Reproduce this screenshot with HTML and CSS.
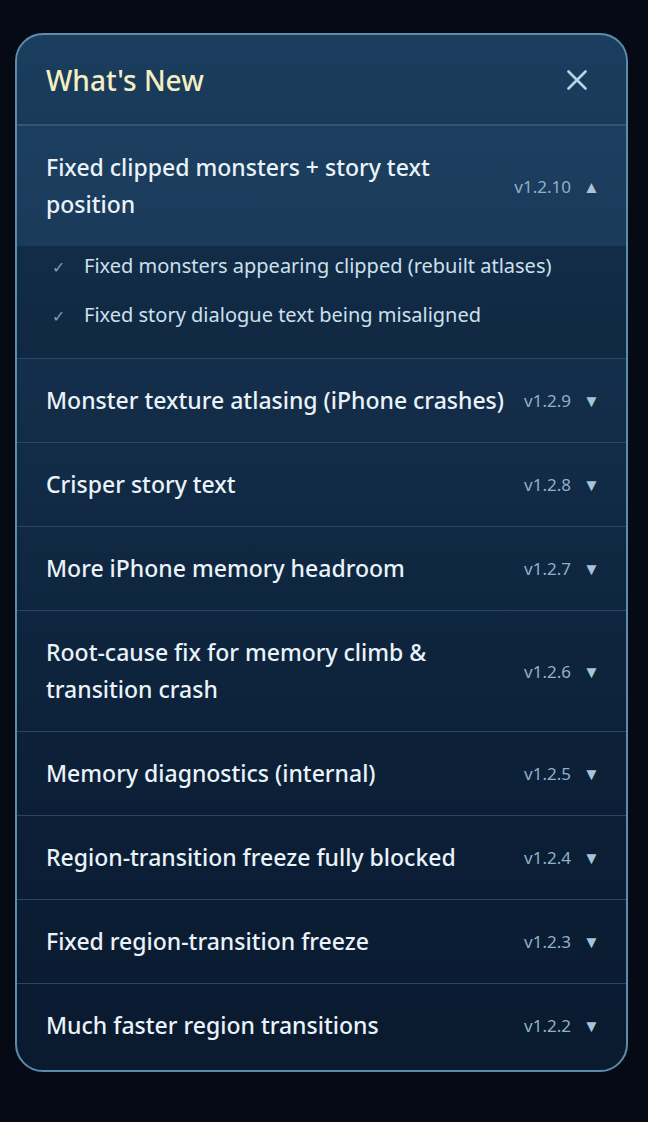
FILE: index.html
```
<!doctype html>
<html lang="en">
<head>
    <meta charset="utf-8">
    <meta name="viewport" content="width=device-width, initial-scale=1">
    <title>What's New</title>
    <link rel="stylesheet" href="styles.css">
</head>
<body>
    <div class="panel">
        <div class="panel-header">
            <h1>What's New</h1>
            <button class="close" aria-label="Close">
                <svg width="20" height="20" viewBox="0 0 20 20"><path d="M1.5 1.5 L18.5 18.5 M18.5 1.5 L1.5 18.5" stroke="#b9d3e4" stroke-width="2.6" stroke-linecap="round"/></svg>
            </button>
        </div>

        <div class="entry open">
            <div class="entry-head">
                <span class="entry-title">Fixed clipped monsters + story text position</span>
                <span class="version">v1.2.10</span>
                <span class="arrow">▲</span>
            </div>
            <ul class="entry-body">
                <li><span class="check">✓</span>Fixed monsters appearing clipped (rebuilt atlases)</li>
                <li><span class="check">✓</span>Fixed story dialogue text being misaligned</li>
            </ul>
        </div>
        <div class="entry">
            <div class="entry-head">
                <span class="entry-title">Monster texture atlasing (iPhone crashes)</span>
                <span class="version">v1.2.9</span>
                <span class="arrow">▼</span>
            </div>
        </div>
        <div class="entry">
            <div class="entry-head">
                <span class="entry-title">Crisper story text</span>
                <span class="version">v1.2.8</span>
                <span class="arrow">▼</span>
            </div>
        </div>
        <div class="entry">
            <div class="entry-head">
                <span class="entry-title">More iPhone memory headroom</span>
                <span class="version">v1.2.7</span>
                <span class="arrow">▼</span>
            </div>
        </div>
        <div class="entry">
            <div class="entry-head">
                <span class="entry-title">Root-cause fix for memory climb &amp; transition crash</span>
                <span class="version">v1.2.6</span>
                <span class="arrow">▼</span>
            </div>
        </div>
        <div class="entry">
            <div class="entry-head">
                <span class="entry-title">Memory diagnostics (internal)</span>
                <span class="version">v1.2.5</span>
                <span class="arrow">▼</span>
            </div>
        </div>
        <div class="entry">
            <div class="entry-head">
                <span class="entry-title">Region-transition freeze fully blocked</span>
                <span class="version">v1.2.4</span>
                <span class="arrow">▼</span>
            </div>
        </div>
        <div class="entry">
            <div class="entry-head">
                <span class="entry-title">Fixed region-transition freeze</span>
                <span class="version">v1.2.3</span>
                <span class="arrow">▼</span>
            </div>
        </div>
        <div class="entry">
            <div class="entry-head">
                <span class="entry-title">Much faster region transitions</span>
                <span class="version">v1.2.2</span>
                <span class="arrow">▼</span>
            </div>
        </div>
    </div>
</body>
</html>
```

FILE: styles.css
```
body {
    margin: 0;
    background-color: #050a14;
    font-family: "Noto Sans", "Open Sans", sans-serif;
    min-height: 1122px;
}
.panel {
    width: 609px;
    margin: 33px 0 0 15px;
    padding-bottom: 3px;
    border: 2px solid #5b8cab;
    border-radius: 28px;
    background: linear-gradient(180deg, #1b3e5e 0%, #142f4c 30%, #0c2038 70%, #0a1a2f 100%);
    overflow: hidden;
}
.panel-header {
    display: flex;
    align-items: center;
    justify-content: space-between;
    height: 89px;
    padding: 0 39px 0 29px;
    border-bottom: 2px solid #2f5877;
}
h1 {
    margin: 0;
    font-size: 28px;
    font-weight: 500;
    color: #f4efc2;
}
.close {
    background: none;
    border: none;
    padding: 0;
    width: 20px;
    height: 20px;
    cursor: pointer;
    display: flex;
}
.entry {
    border-bottom: 1px solid #24476a;
}
.entry:last-child {
    border-bottom: none;
}
.entry.open .entry-head {
    background-color: rgba(40, 80, 115, 0.25);
}
.entry-head {
    display: flex;
    align-items: center;
    padding: 23px 29px 23px 29px;
}
.entry-title {
    flex: 1;
    font-size: 23px;
    font-weight: 500;
    line-height: 37px;
    color: #eaf3f9;
    padding-right: 16px;
}
.version {
    font-size: 17px;
    color: #8fb1c8;
}
.arrow {
    margin-left: 12px;
    font-size: 17px;
    color: #a7c5d9;
    width: 14px;
    text-align: center;
}
.entry-body {
    list-style: none;
    margin: 0;
    padding: 0 0 22px 0;
    background-color: rgba(5, 15, 30, 0.2);
    display: flex;
    flex-direction: column;
    gap: 8px;
}
.entry-body li {
    line-height: 40px;
    font-size: 20px;
    color: #cde0ec;
    padding-left: 35px;
}
.check {
    display: inline-block;
    width: 32px;
    font-size: 16px;
    color: #7d9fb6;
}
```
